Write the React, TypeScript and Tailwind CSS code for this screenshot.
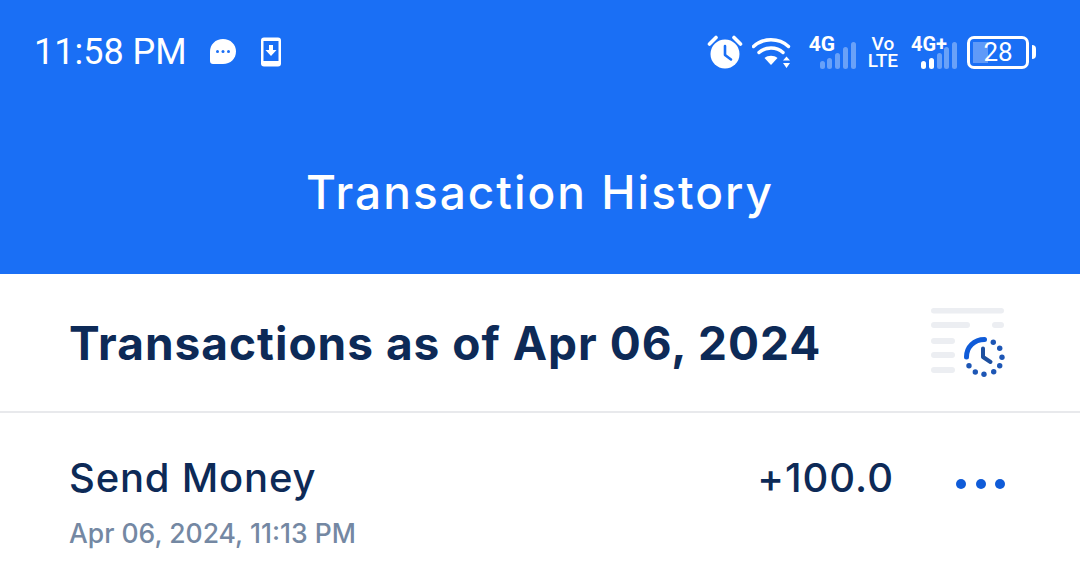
import React from 'react'

const AlarmIcon = () => (
    <svg width="36" height="36" viewBox="0 0 36 36" fill="none">
        <circle cx="18" cy="20" r="14.5" fill="#fff" />
        <path d="M18 12v9l6 4.5" stroke="#1a6ff5" strokeWidth="2.6" strokeLinecap="round" strokeLinejoin="round" />
        <path d="M2.5 10 9 3.5M33.5 10 27 3.5" stroke="#fff" strokeWidth="3.6" strokeLinecap="round" />
    </svg>
)

const WifiIcon = () => (
    <svg width="40" height="32" viewBox="0 0 40 32" fill="none">
        <path d="M1.5 10.5C11 1.5 27 1.5 36.5 10.5" stroke="#fff" strokeWidth="3.4" strokeLinecap="round" />
        <path d="M7 16.5C13.5 10.5 24.5 10.5 31 16.5" stroke="#fff" strokeWidth="3.4" strokeLinecap="round" />
        <path d="M12.5 22C16 19 22 19 25.5 22L19 29z" fill="#fff" />
        <path d="M33.5 21.5l-3.5 4h7zM33.5 33l-3.5-5h7z" fill="#fff" transform="translate(1 -1)" />
    </svg>
)

const ChatIcon = () => (
    <svg width="28" height="28" viewBox="0 0 28 28">
        <path d="M14 1C21.5 1 27 6.5 27 13.5S21.5 26 14 26H4C2.2 26 1 24.8 1 23V13.5C1 6.5 6.5 1 14 1z" fill="#fff" />
        <circle cx="8.5" cy="13.5" r="1.5" fill="#1a6ff5" />
        <circle cx="14" cy="13.5" r="1.5" fill="#1a6ff5" />
        <circle cx="19.5" cy="13.5" r="1.5" fill="#1a6ff5" />
    </svg>
)

const PhoneDownloadIcon = () => (
    <svg width="22" height="30" viewBox="0 0 22 30">
        <rect x="1" y="0.5" width="20" height="29" rx="3" fill="#fff" />
        <rect x="3.5" y="4" width="15" height="20" fill="#1a6ff5" />
        <path d="M9 8h4v5h3.5L11 19l-5.5-6H9z" fill="#fff" />
    </svg>
)

const SignalBars = ({ bright }: { bright: number }) => {
    const heights = [8, 11, 16, 22, 27]
    return (
        <div className="flex items-end gap-[2.75px]">
            {heights.map((h, i) => (
                <div
                    key={i}
                    className="w-[5px] rounded-full"
                    style={{ height: h, backgroundColor: i < bright ? '#ffffff' : 'rgba(255,255,255,0.35)' }}
                />
            ))}
        </div>
    )
}

const HistoryArt = () => (
    <svg width="76" height="72" viewBox="0 0 76 72" fill="none">
        <rect x="0" y="1" width="73" height="5.5" rx="2.75" fill="#eceef2" />
        <rect x="0" y="15" width="39" height="6" rx="3" fill="#eceef2" />
        <rect x="61" y="15" width="12" height="6" rx="3" fill="#eceef2" />
        <rect x="0" y="31" width="24" height="6" rx="3" fill="#eceef2" />
        <rect x="0" y="45" width="24" height="6" rx="3" fill="#eceef2" />
        <rect x="0" y="60" width="24" height="6" rx="3" fill="#eceef2" />
        <path d="M35.5 50C35.5 40 43 32.5 53.5 32.5" stroke="#0f5bd8" strokeWidth="5" strokeLinecap="round" />
        <path d="M52 41.5v8.5l7.5 5" stroke="#1d4f9f" strokeWidth="4" strokeLinecap="round" strokeLinejoin="round" />
        {[
            [62.3, 35.3],
            [68.7, 41.3],
            [71, 50.3],
            [68.7, 58.7],
            [62.7, 64.7],
            [53, 67.3],
            [44.3, 65],
            [38, 58.7],
        ].map(([cx, cy]) => (
            <circle key={`${cx}-${cy}`} cx={cx} cy={cy} r="2.7" fill="#1d56b5" />
        ))}
    </svg>
)

export default function App() {
    return (
        <div className="w-[1080px] h-[570px] overflow-hidden bg-white font-['Inter',sans-serif]">
            <header className="h-[274px] bg-[#1a6ff5] text-white">
                <div className="h-[104px] pl-[34px] pr-[44px] flex items-center justify-between font-['Roboto',sans-serif]">
                    <div className="flex items-center">
                        <span className="text-[36px] leading-none">11:58 PM</span>
                        <span className="ml-[22px] flex"><ChatIcon /></span>
                        <span className="ml-[23px] flex"><PhoneDownloadIcon /></span>
                    </div>
                    <div className="flex items-center">
                        <AlarmIcon />
                        <span className="ml-[9px] flex"><WifiIcon /></span>
                        <div className="ml-[17px] relative w-[47px] h-[34px]">
                            <span className="absolute left-0 -top-[1px] text-[21px] font-bold leading-none">4G</span>
                            <div className="absolute right-0 bottom-0"><SignalBars bright={0} /></div>
                        </div>
                        <div className="ml-[12px] flex flex-col items-center text-[19px] font-medium leading-[17px]">
                            <span>Vo</span>
                            <span>LTE</span>
                        </div>
                        <div className="ml-[13px] relative w-[46px] h-[34px]">
                            <span className="absolute left-0 -top-[1px] text-[20px] font-bold leading-none">4G+</span>
                            <div className="absolute right-0 bottom-0"><SignalBars bright={2} /></div>
                        </div>
                        <div className="ml-[10px] flex items-center">
                            <div className="relative w-[62px] h-[33px] rounded-[7px] border-[3px] border-white flex items-center justify-center">
                                <div className="absolute left-[3px] top-[3px] bottom-[3px] w-[15px] bg-white/30" />
                                <span className="relative text-[26px] leading-none">28</span>
                            </div>
                            <div className="ml-[3px] w-[4px] h-[14px] rounded-r-full bg-white" />
                        </div>
                    </div>
                </div>
                <h1 className="mt-[65px] text-center text-[46px] font-medium leading-none tracking-[2px]">
                    Transaction History
                </h1>
            </header>

            <section className="h-[139px] pl-[69px] pr-[73px] flex items-center justify-between border-b-2 border-[#e8e9ec]">
                <h2 className="text-[46px] font-bold leading-none text-[#0d2a57] tracking-[1px]">
                    Transactions as of Apr 06, 2024
                </h2>
                <HistoryArt />
            </section>

            <div className="pl-[69px] pr-[75px] pt-[45px] flex justify-between">
                <div>
                    <div className="text-[40px] leading-none font-medium text-[#0d2a57] tracking-[0.8px]">Send Money</div>
                    <div className="mt-[22px] text-[26.5px] leading-none text-[#7488a3] font-medium">Apr 06, 2024, 11:13 PM</div>
                </div>
                <div className="flex items-start">
                    <span className="text-[40px] leading-none font-medium text-[#0d2a57] tracking-[1px]">+100.0</span>
                    <div className="ml-[62px] mt-[21px] flex gap-[9.5px]">
                        <span className="w-[10px] h-[10px] rounded-full bg-[#0f5bd8]" />
                        <span className="w-[10px] h-[10px] rounded-full bg-[#0f5bd8]" />
                        <span className="w-[10px] h-[10px] rounded-full bg-[#0f5bd8]" />
                    </div>
                </div>
            </div>
        </div>
    )
}
